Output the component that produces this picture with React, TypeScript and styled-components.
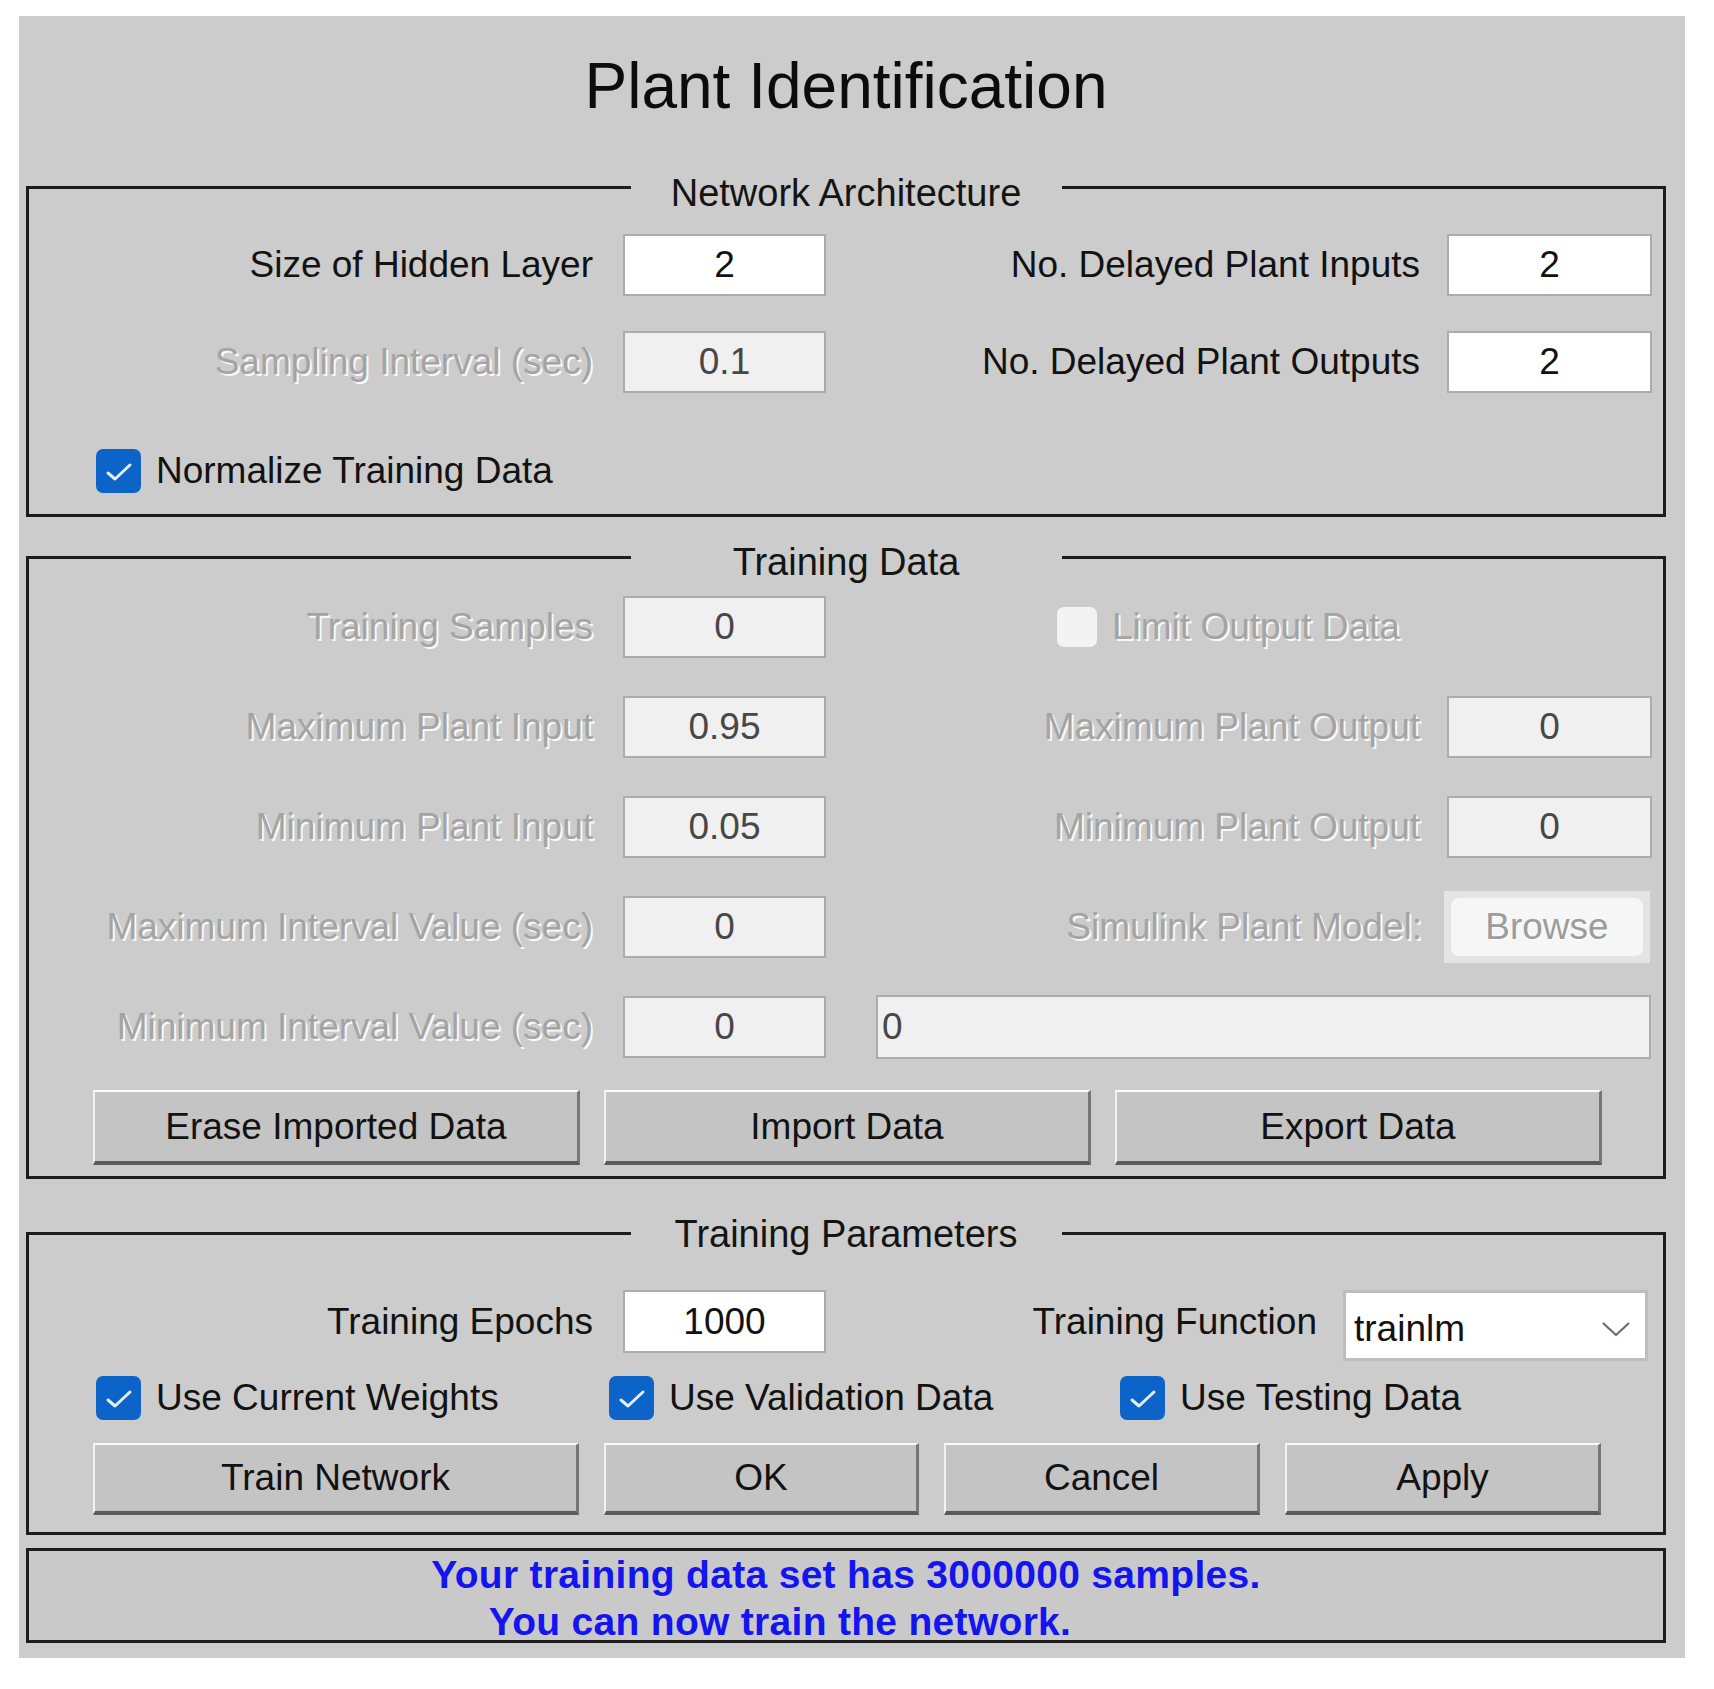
import React from "react";
import styled, { createGlobalStyle } from "styled-components";

const GlobalStyle = createGlobalStyle`
  html, body {
    margin: 0;
    padding: 0;
    background: #ffffff;
  }
  body {
    font-family: "Liberation Sans", Arial, Helvetica, sans-serif;
    color: #161616;
  }
`;

const Page = styled.div`
  padding: 16px 0 0 19px;
`;

const Window = styled.div`
  width: 1666px;
  height: 1642px;
  box-sizing: border-box;
  background: #cccccc;
  padding: 33px 19px 0 7px;
  display: flex;
  flex-direction: column;
`;

const Title = styled.h1`
  margin: 0 0 36px 0;
  font-size: 64px;
  font-weight: 400;
  line-height: 74px;
  text-align: center;
  color: #0c0c0c;
`;

const Group = styled.fieldset<{ $mt: number; $pt: number; $pb: number }>`
  margin: ${({ $mt }) => $mt}px 0 0 0;
  padding: ${({ $pt }) => $pt}px 0 ${({ $pb }) => $pb}px 0;
  min-width: 0;
  border: 3px solid #1c1c1c;
  display: flex;
  flex-direction: column;
`;

const Legend = styled.legend<{ $shift: number }>`
  width: 431px;
  margin: 0 auto;
  padding: ${({ $shift }) => $shift * 2}px 0 0 0;
  font-size: 38px;
  line-height: 44px;
  text-align: center;
  color: #141414;
`;

const Row = styled.div<{ $h: number; $mt?: number }>`
  display: flex;
  align-items: center;
  height: ${({ $h }) => $h}px;
  margin-top: ${({ $mt }) => $mt ?? 0}px;
`;

const LeftCell = styled.div`
  width: 797px;
  height: 100%;
  display: flex;
  justify-content: flex-end;
  align-items: center;
`;

const RightCell = styled.div<{ $start?: boolean; $pl?: number; $pr?: number }>`
  flex: 1;
  height: 100%;
  display: flex;
  justify-content: ${({ $start }) => ($start ? "flex-start" : "flex-end")};
  align-items: center;
  padding-left: ${({ $pl }) => $pl ?? 0}px;
  padding-right: ${({ $pr }) => $pr ?? 11}px;
`;

const Label = styled.span<{ $disabled?: boolean; $gap?: number }>`
  font-size: 37px;
  line-height: 44px;
  white-space: nowrap;
  padding-right: ${({ $gap }) => $gap ?? 30}px;
  color: ${({ $disabled }) => ($disabled ? "#a4a4a4" : "#121212")};
  text-shadow: ${({ $disabled }) =>
    $disabled ? "2px 2px 0 rgba(255, 255, 255, 0.9)" : "none"};
`;

const Field = styled.div<{ $disabled?: boolean; $w?: number; $h?: number; $left?: boolean }>`
  box-sizing: border-box;
  width: ${({ $w }) => ($w ? `${$w}px` : "auto")};
  flex: ${({ $w }) => ($w ? "none" : "1")};
  height: ${({ $h }) => $h ?? 62}px;
  border: 2px solid #acacac;
  background: ${({ $disabled }) => ($disabled ? "#f0f0f0" : "#ffffff")};
  display: flex;
  align-items: center;
  justify-content: ${({ $left }) => ($left ? "flex-start" : "center")};
  padding-left: ${({ $left }) => ($left ? "4px" : "0")};
  font-size: 37px;
  color: ${({ $disabled }) => ($disabled ? "#474747" : "#111111")};
`;

const Select = styled.div`
  box-sizing: border-box;
  align-self: flex-start;
  width: 305px;
  height: 71px;
  border: 3px solid #bdbdbd;
  background: #ffffff;
  display: flex;
  align-items: center;
  justify-content: space-between;
  padding: 6px 14px 0 8px;
  font-size: 37px;
  color: #111111;
`;

const DisabledButton = styled.div`
  box-sizing: border-box;
  width: 206px;
  height: 72px;
  background: #e4e4e4;
  padding: 7px;
  display: flex;
`;

const DisabledFace = styled.div`
  flex: 1;
  border-radius: 8px;
  background: #f6f6f6;
  display: flex;
  align-items: center;
  justify-content: center;
  font-size: 37px;
  color: #9c9c9c;
  text-shadow: 1px 1px 0 #ffffff;
`;

const CheckRow = styled.div<{ $cols: string; $mt: number }>`
  display: grid;
  grid-template-columns: ${({ $cols }) => $cols};
  align-items: center;
  height: 45px;
  margin-top: ${({ $mt }) => $mt}px;
  padding-left: 67px;
`;

const CheckItem = styled.label`
  display: flex;
  align-items: center;
  gap: 15px;
  font-size: 37px;
  white-space: nowrap;
  color: #121212;
`;

const Box = styled.span<{ $checked?: boolean; $size?: number }>`
  box-sizing: border-box;
  width: ${({ $size }) => $size ?? 45}px;
  height: ${({ $size }) => ($size ? $size : 44)}px;
  border-radius: 7px;
  background: ${({ $checked }) => ($checked ? "#0d64c8" : "#f3f3f3")};
  display: flex;
  align-items: center;
  justify-content: center;
  flex: none;
`;

const ButtonRow = styled.div<{ $cols: string; $gap: number; $h: number; $mt: number }>`
  display: grid;
  grid-template-columns: ${({ $cols }) => $cols};
  column-gap: ${({ $gap }) => $gap}px;
  height: ${({ $h }) => $h}px;
  margin-top: ${({ $mt }) => $mt}px;
  padding-left: 64px;
`;

const Button = styled.button`
  box-sizing: border-box;
  height: 100%;
  margin: 0;
  padding: 0;
  background: #c4c4c4;
  border-style: solid;
  border-width: 2px 3px 4px 2px;
  border-color: #fbfbfb #767676 #5a5a5a #f2f2f2;
  font-family: "Liberation Sans", Arial, Helvetica, sans-serif;
  font-size: 37px;
  color: #121212;
`;

const Status = styled.div`
  box-sizing: border-box;
  height: 95px;
  margin-top: 13px;
  border: 3px solid #1c1c1c;
  background: #c9c9c9;
  display: flex;
  flex-direction: column;
  align-items: center;
  font-size: 39px;
  font-weight: 700;
  line-height: 47px;
  letter-spacing: 0.3px;
  color: #1414ee;
`;

const StatusLine = styled.div<{ $indent?: number }>`
  padding-right: ${({ $indent }) => $indent ?? 0}px;
  white-space: nowrap;
`;

const Check = () => (
  <svg width="45" height="44" viewBox="0 0 45 44">
    <polyline
      points="12,24 19,30 34,16"
      fill="none"
      stroke="#e4edf9"
      strokeWidth="3"
      strokeLinecap="round"
      strokeLinejoin="round"
    />
  </svg>
);

const Chevron = () => (
  <svg width="30" height="18" viewBox="0 0 30 18">
    <polyline
      points="2,3 15,15 28,3"
      fill="none"
      stroke="#6e6e6e"
      strokeWidth="2.2"
    />
  </svg>
);

const App: React.FC = () => {
  return (
    <>
      <GlobalStyle />
      <Page>
        <Window>
          <Title>Plant Identification</Title>

          <Group $mt={0} $pt={19} $pb={21}>
            <Legend $shift={6}>Network Architecture</Legend>
            <Row $h={62}>
              <LeftCell>
                <Label>Size of Hidden Layer</Label>
                <Field $w={203}>2</Field>
              </LeftCell>
              <RightCell>
                <Label $gap={27}>No. Delayed Plant Inputs</Label>
                <Field $w={205}>2</Field>
              </RightCell>
            </Row>
            <Row $h={63} $mt={34}>
              <LeftCell>
                <Label $disabled>Sampling Interval (sec)</Label>
                <Field $w={203} $disabled>
                  0.1
                </Field>
              </LeftCell>
              <RightCell>
                <Label $gap={27}>No. Delayed Plant Outputs</Label>
                <Field $w={205}>2</Field>
              </RightCell>
            </Row>
            <CheckRow $cols="auto" $mt={55}>
              <CheckItem>
                <Box $checked>
                  <Check />
                </Box>
                Normalize Training Data
              </CheckItem>
            </CheckRow>
          </Group>

          <Group $mt={13} $pt={12} $pb={11}>
            <Legend $shift={5}>Training Data</Legend>
            <Row $h={62}>
              <LeftCell>
                <Label $disabled>Training Samples</Label>
                <Field $w={203} $disabled>
                  0
                </Field>
              </LeftCell>
              <RightCell $start $pl={231}>
                <CheckItem>
                  <Box $size={40} />
                  <Label $disabled $gap={0}>
                    Limit Output Data
                  </Label>
                </CheckItem>
              </RightCell>
            </Row>
            <Row $h={62} $mt={38}>
              <LeftCell>
                <Label $disabled>Maximum Plant Input</Label>
                <Field $w={203} $disabled>
                  0.95
                </Field>
              </LeftCell>
              <RightCell>
                <Label $disabled $gap={27}>
                  Maximum Plant Output
                </Label>
                <Field $w={205} $disabled>
                  0
                </Field>
              </RightCell>
            </Row>
            <Row $h={62} $mt={38}>
              <LeftCell>
                <Label $disabled>Minimum Plant Input</Label>
                <Field $w={203} $disabled>
                  0.05
                </Field>
              </LeftCell>
              <RightCell>
                <Label $disabled $gap={27}>
                  Minimum Plant Output
                </Label>
                <Field $w={205} $disabled>
                  0
                </Field>
              </RightCell>
            </Row>
            <Row $h={62} $mt={38}>
              <LeftCell>
                <Label $disabled>Maximum Interval Value (sec)</Label>
                <Field $w={203} $disabled>
                  0
                </Field>
              </LeftCell>
              <RightCell $pr={13}>
                <Label $disabled $gap={22}>
                  Simulink Plant Model:
                </Label>
                <DisabledButton>
                  <DisabledFace>Browse</DisabledFace>
                </DisabledButton>
              </RightCell>
            </Row>
            <Row $h={62} $mt={38}>
              <LeftCell>
                <Label $disabled>Minimum Interval Value (sec)</Label>
                <Field $w={203} $disabled>
                  0
                </Field>
              </LeftCell>
              <RightCell $pl={50} $pr={12}>
                <Field $disabled $left $h={64}>
                  0
                </Field>
              </RightCell>
            </Row>
            <ButtonRow $cols="487px 487px 487px" $gap={24} $h={75} $mt={32}>
              <Button type="button">Erase Imported Data</Button>
              <Button type="button">Import Data</Button>
              <Button type="button">Export Data</Button>
            </ButtonRow>
          </Group>

          <Group $mt={31} $pt={34} $pb={17}>
            <Legend $shift={1}>Training Parameters</Legend>
            <Row $h={63}>
              <LeftCell>
                <Label>Training Epochs</Label>
                <Field $w={203} $h={63}>
                  1000
                </Field>
              </LeftCell>
              <RightCell $pr={15}>
                <Label $gap={26}>Training Function</Label>
                <Select>
                  <span>trainlm</span>
                  <Chevron />
                </Select>
              </RightCell>
            </Row>
            <CheckRow $cols="513px 511px auto" $mt={22}>
              <CheckItem>
                <Box $checked>
                  <Check />
                </Box>
                Use Current Weights
              </CheckItem>
              <CheckItem>
                <Box $checked>
                  <Check />
                </Box>
                Use Validation Data
              </CheckItem>
              <CheckItem>
                <Box $checked>
                  <Check />
                </Box>
                Use Testing Data
              </CheckItem>
            </CheckRow>
            <ButtonRow $cols="486px 315px 316px 316px" $gap={25} $h={72} $mt={23}>
              <Button type="button">Train Network</Button>
              <Button type="button">OK</Button>
              <Button type="button">Cancel</Button>
              <Button type="button">Apply</Button>
            </ButtonRow>
          </Group>

          <Status>
            <StatusLine>Your training data set has 3000000 samples.</StatusLine>
            <StatusLine $indent={132}>You can now train the network.</StatusLine>
          </Status>
        </Window>
      </Page>
    </>
  );
};

export default App;
